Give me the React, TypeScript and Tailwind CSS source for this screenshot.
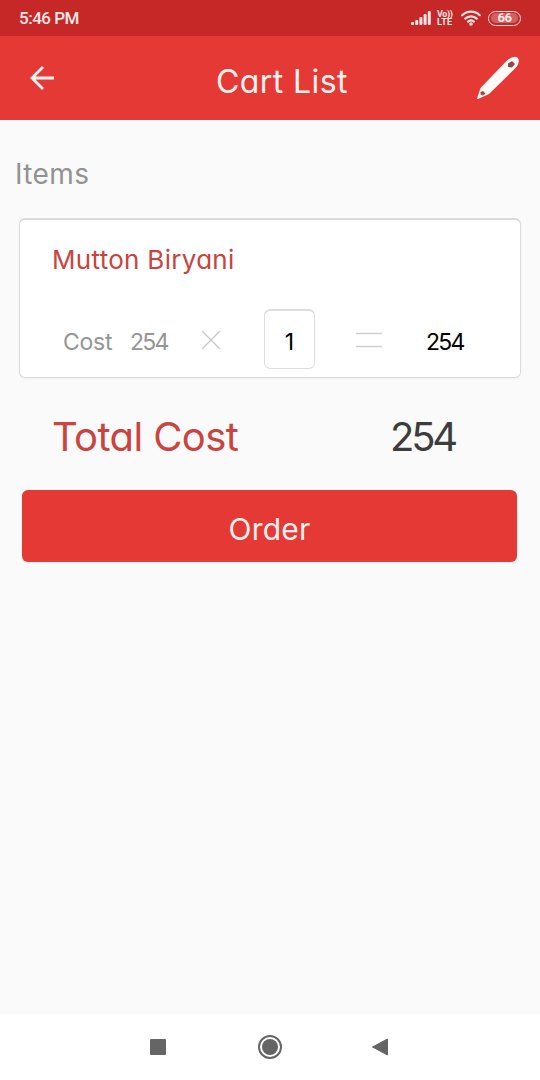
import type { ReactNode } from 'react';

function SignalIcon() {
  return (
    <svg width="20" height="14" viewBox="0 0 20 14" fill="#fbe3e3">
      <rect x="0" y="11" width="3" height="3" rx="1" />
      <rect x="4.2" y="9" width="3" height="5" rx="1" />
      <rect x="8.4" y="6" width="3" height="8" rx="1" />
      <rect x="12.6" y="3" width="3" height="11" rx="1" />
      <rect x="16.8" y="0" width="3" height="14" rx="1" />
    </svg>
  );
}

function WifiIcon() {
  return (
    <svg width="20" height="16" viewBox="0 0 20 16" fill="none" stroke="#fbe3e3" strokeWidth="2.2" strokeLinecap="round">
      <path d="M1.2 5.2a12.6 12.6 0 0 1 17.6 0" />
      <path d="M4.2 8.6a8.4 8.4 0 0 1 11.6 0" />
      <path d="M7 11.6a4.6 4.6 0 0 1 6 0" />
      <circle cx="10" cy="14" r="0.7" fill="#fbe3e3" />
    </svg>
  );
}

function StatusBar() {
  return (
    <div className="flex h-9 items-center justify-between bg-[#c62828] px-[19px] text-[#fbe9e7]">
      <span className="font-[Roboto,sans-serif] text-[17px] leading-none font-medium tracking-[-0.5px]">5:46 PM</span>
      <div className="flex items-center">
        <SignalIcon />
        <div className="ml-1.5 flex w-4 flex-col font-[Roboto,sans-serif] text-[9px] leading-[8px] font-bold">
          <span className="tracking-[-0.4px]">Vo))</span>
          <span className="tracking-[0.3px]">LTE</span>
        </div>
        <div className="ml-2">
          <WifiIcon />
        </div>
        <div className="ml-[7px] flex h-[15px] w-[33px] items-center justify-center rounded-full border-[1.5px] border-[#fbe3e3]">
          <span className="rounded-full bg-[#d97777]/70 px-1.5 font-[Roboto,sans-serif] text-[13px] leading-[10px] font-bold tracking-[-0.4px]">66</span>
        </div>
      </div>
    </div>
  );
}

function AppBar() {
  return (
    <header className="flex h-[84px] items-center justify-between bg-[#e53935] pr-5 pl-[30px]">
      <svg width="44" height="26" viewBox="0 0 44 26" fill="none" stroke="#fff5f2" strokeWidth="2.8">
        <path d="M24 13H2M13 2L2 13l11 11" />
      </svg>
      <h1 className="mt-2 ml-[14px] text-[32px] leading-10 tracking-[0.4px] whitespace-nowrap text-[#fff1ec]">Cart List</h1>
      <svg width="44" height="44" viewBox="0 0 44 44">
        <path d="M1 42.5L4.5 32 31 4.500q7-6 11-2.500 2.500 4-2.500 10L13 38 2 43z" fill="#fffaf7" />
        <path d="M32 7.500l4-2.500 3 3-3 3.500-4-.500z" fill="#8f4a44" />
        <path d="M4.500 36l2.500-1 2.500 2.500-2.500 2-2.500-1z" fill="#a8443f" />
      </svg>
    </header>
  );
}

function ItemCard() {
  return (
    <section className="mx-[19px] mt-[25px] h-40 rounded-md border border-t-2 border-[#dadada] bg-white shadow-[0_1px_2px_rgba(0,0,0,0.04)]">
      <h3 className="mt-[23px] ml-[32px] text-[26px] leading-[34px] tracking-[0.3px] text-[#c94440]">Mutton Biryani</h3>
      <div className="mt-[32px] flex h-[60px] items-center text-[23px] leading-none">
        <span className="mt-1.5 ml-[43px] w-[67px] tracking-[-0.250px] text-[#959595]">Cost</span>
        <span className="mt-1.5 w-[71px] tracking-[-1.700px] text-[#959595]">254</span>
        <svg className="mt-0.5" width="20" height="20" viewBox="0 0 20 20" stroke="#c9c9c9" strokeWidth="1.4">
          <path d="M1 1l18 18M19 1L1 19" />
        </svg>
        <div className="ml-[43px] flex h-[60px] w-[51px] items-center justify-center rounded-md border border-t-2 border-[#dddddd] pt-[5px] text-black">1</div>
        <svg className="mt-0.5 ml-[41px]" width="26" height="16" viewBox="0 0 26 16" stroke="#cfcfcf" strokeWidth="1.6">
          <path d="M0 1.500h26M0 14.500h26" />
        </svg>
        <span className="mt-1.5 ml-[44px] tracking-[-1.700px] text-black">254</span>
      </div>
    </section>
  );
}

function NavButton({ children }: { children: ReactNode }) {
  return <div className="flex w-[111px] justify-center">{children}</div>;
}

function NavBar() {
  return (
    <nav className="flex h-[66px] items-center justify-center bg-white">
      <NavButton>
        <div className="mr-0.5 size-4 rounded-[1px] bg-[#656565]" />
      </NavButton>
      <NavButton>
        <div className="flex size-6 items-center justify-center rounded-full border-2 border-[#656565]">
          <div className="size-4 rounded-full bg-[#656565]" />
        </div>
      </NavButton>
      <NavButton>
        <svg className="mr-0.5" width="16" height="18" viewBox="0 0 16 18" fill="#656565" stroke="#656565" strokeLinejoin="round">
          <path d="M15.500 1v16L0.500 9z" />
        </svg>
      </NavButton>
    </nav>
  );
}

export default function App() {
  return (
    <div className="flex h-[1080px] w-[540px] flex-col bg-[#fafafa] font-[Inter,sans-serif] [font-feature-settings:'cv11','ss03']">
      <StatusBar />
      <AppBar />
      <main className="flex flex-1 flex-col">
        <h2 className="mt-[35px] ml-[15px] text-[28px] leading-[38px] tracking-[0.4px] text-[#929292]">Items</h2>
        <ItemCard />
        <div className="mt-[34px] flex h-[50px] items-center justify-between pr-[85px] pl-[52px] text-[40px] leading-none">
          <span className="tracking-[-0.6px] text-[#c94440]">Total Cost</span>
          <span className="tracking-[-3.200px] text-[#3d3d3d]">254</span>
        </div>
        <button className="mt-[28px] mr-[23px] ml-[22px] h-[72px] rounded-md bg-[#e53935] pt-[7px] text-[30px] tracking-[0.200px] text-[#fff1ec] shadow-xs">Order</button>
      </main>
      <NavBar />
    </div>
  );
}
